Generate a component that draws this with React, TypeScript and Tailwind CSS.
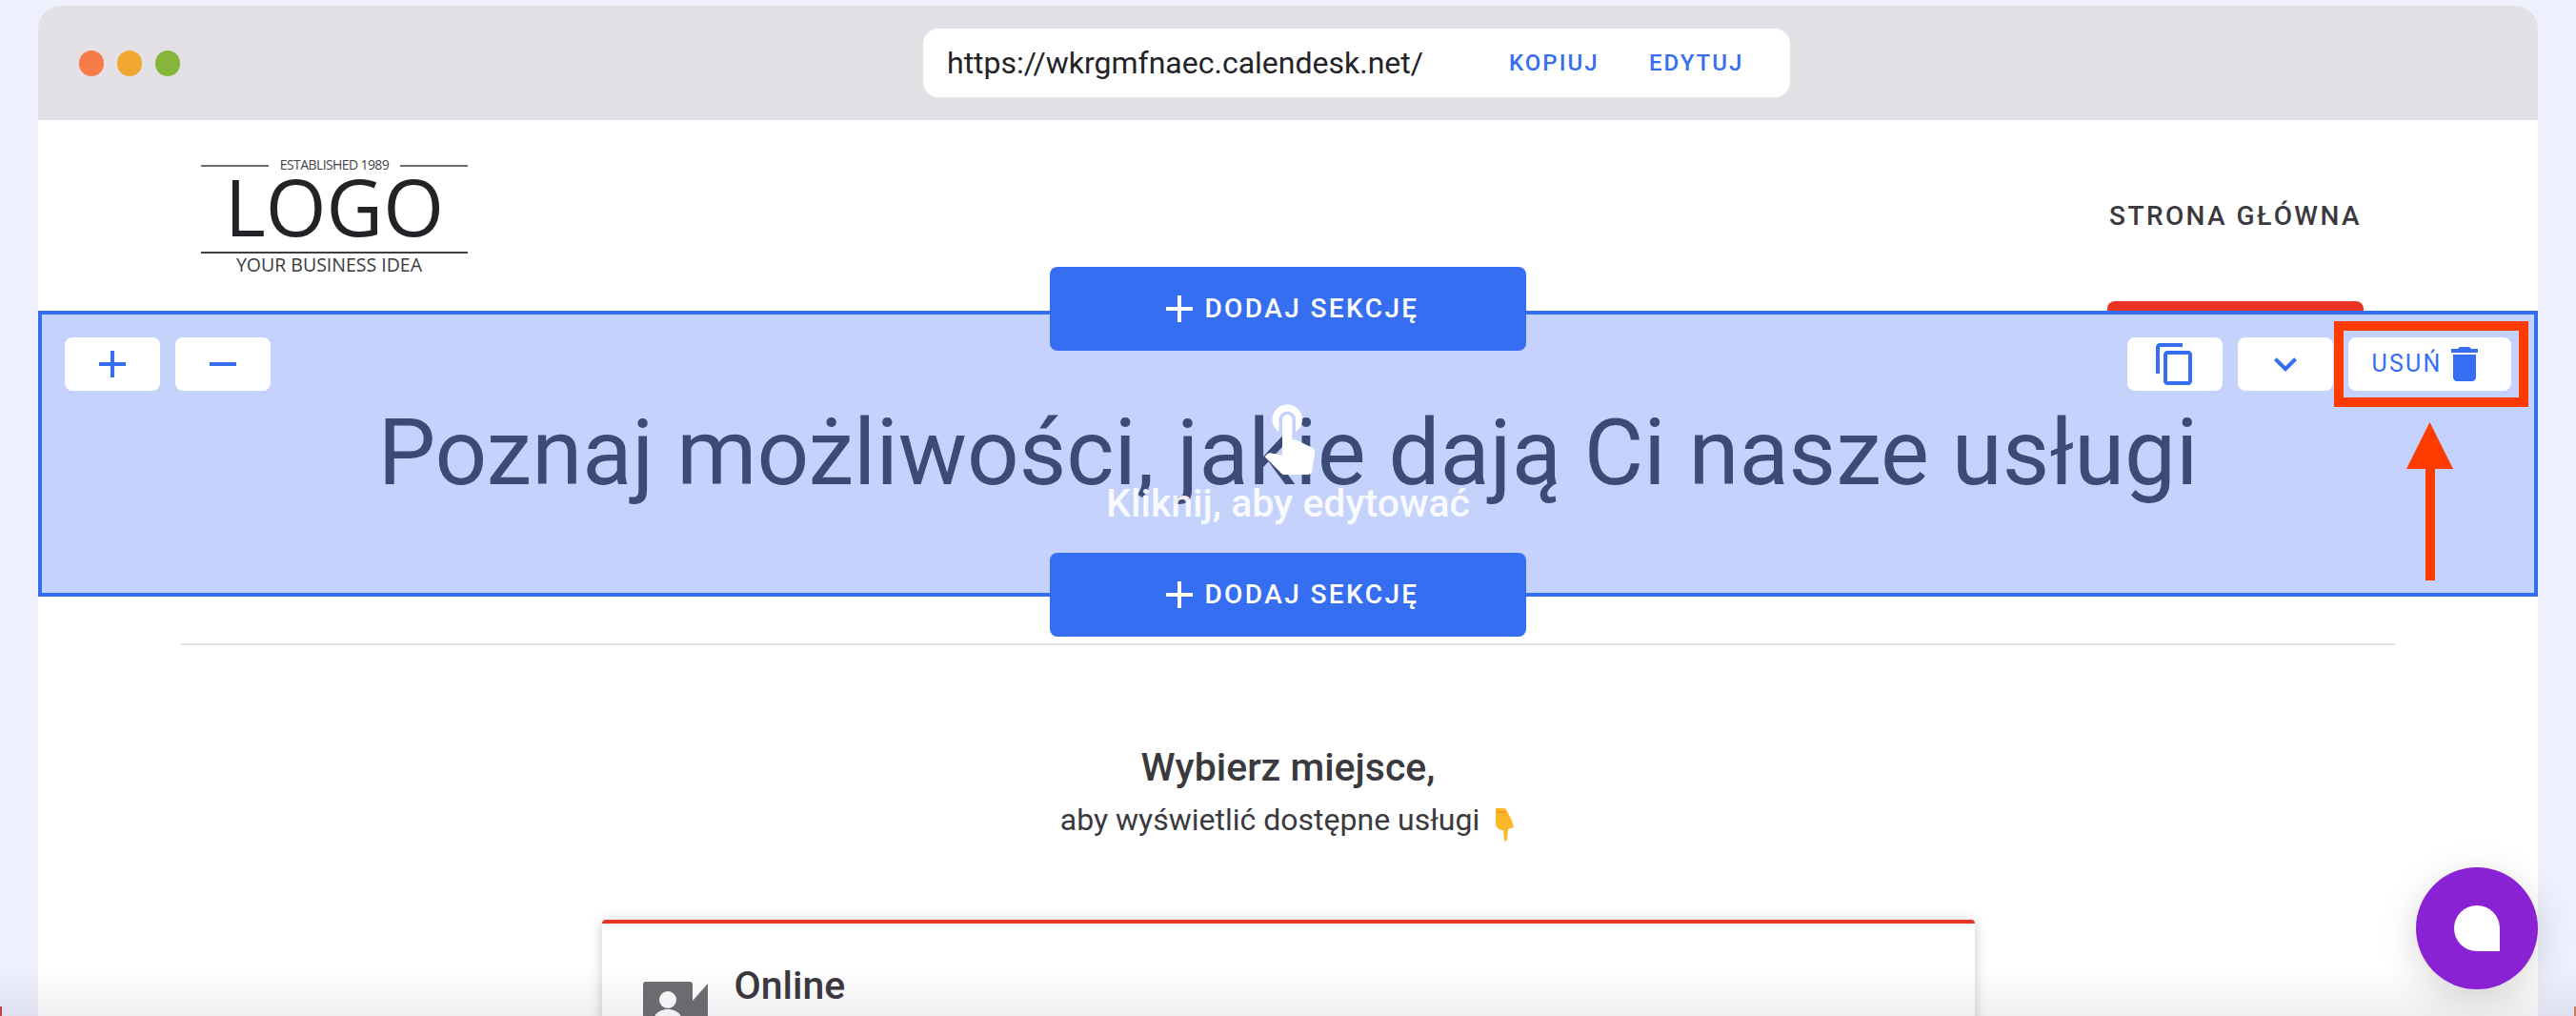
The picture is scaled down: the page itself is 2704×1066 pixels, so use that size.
import React from 'react'
import { MdAdd, MdContentCopy, MdDelete, MdExpandMore, MdRemove, MdTouchApp } from 'react-icons/md'

const ToolButton = ({ children, wide }: { children: React.ReactNode; wide?: boolean }) => (
  <div className={`h-14 rounded-lg bg-white flex items-center justify-center text-[#366ef2] ${wide ? 'w-[171px]' : 'w-[100px]'}`}>
    {children}
  </div>
)

const AddSection = ({ className }: { className: string }) => (
  <div className={`absolute left-1/2 -translate-x-1/2 z-20 w-[500px] h-[88px] rounded-lg bg-[#366ef2] text-white flex items-center justify-center ${className}`}>
    <MdAdd size={48} />
    <span className="ml-[2px] text-[28px] font-medium tracking-[2.4px]">DODAJ SEKCJĘ</span>
  </div>
)

const PointingDown = () => (
  <svg width="26" height="36" viewBox="0 0 26 36" className="inline-block ml-[12px] -mb-[4px]">
    <path d="M5 1h8c2 0 3 1 4 3l5 10 2 7-6 2-1 11c0 2-3 2-3 0l-1-10c-4 0-7-2-8-6z" fill="#fbb829" />
    <path d="M6 5h9" stroke="#f29f16" strokeWidth="2" />
  </svg>
)

export default function App() {
  return (
    <div className="relative w-[2704px] h-[1066px] overflow-hidden bg-[#eef0fd] px-10 pt-[6px] font-['Roboto',sans-serif] text-[#3a393e]">
      <div className="relative h-[1200px] rounded-t-3xl bg-white">
        {/* Browser bar */}
        <div className="h-[120px] rounded-t-3xl bg-[#e3e1e5] flex items-center pl-[43px]">
          <div className="flex gap-[14px]">
            <div className="w-[26px] h-[27px] rounded-full bg-[#f97a4b]" />
            <div className="w-[26px] h-[27px] rounded-full bg-[#efa72f]" />
            <div className="w-[26px] h-[27px] rounded-full bg-[#86b53a]" />
          </div>
          <div className="ml-[780px] w-[910px] h-[72px] rounded-2xl bg-white flex items-center pl-[25px] text-[#232226]">
            <span className="w-[590px] text-[32px]">https://wkrgmfnaec.calendesk.net/</span>
            <span className="w-[147px] text-[24px] font-medium tracking-[2px] text-[#366ef2]">KOPIUJ</span>
            <span className="text-[24px] font-medium tracking-[2px] text-[#366ef2]">EDYTUJ</span>
          </div>
        </div>

        {/* Site header */}
        <div className="h-[200px] flex justify-between pl-[171px] pr-[183px]">
          <div className="w-[280px] pt-[38px] font-['Open_Sans',sans-serif] text-[#232226]">
            <div className="h-4 flex items-center justify-between text-[14px] text-[#444348]">
              <div className="w-[71px] h-[2px] mt-1 bg-[#6b6a6e]" />
              <span className="tracking-[-0.6px]">ESTABLISHED 1989</span>
              <div className="w-[71px] h-[2px] mt-1 bg-[#6b6a6e]" />
            </div>
            <div className="mt-px h-[70px] text-center text-[82px] leading-[70px]">LOGO</div>
            <div className="mt-[13px] h-[2px] bg-[#3f3e42]" />
            <div className="pr-[11px] text-center text-[19.5px] leading-6 text-[#3a393e]">YOUR BUSINESS IDEA</div>
          </div>
          <div className="w-[269px] pt-[85px] flex flex-col items-center">
            <span className="text-[28px] leading-8 font-medium tracking-[2.4px]">STRONA GŁÓWNA</span>
            <div className="mt-[73px] w-full h-10 shrink-0 rounded-lg bg-[#e93323]" />
          </div>
        </div>

        {/* Selected section */}
        <div className="relative z-10 h-[300px] border-4 border-[#366ef2] bg-[#c4d2fc]">
          <AddSection className="-top-[50px]" />
          <AddSection className="-bottom-[46px]" />
          <div className="flex justify-between px-6 pt-6">
            <div className="flex gap-4">
              <ToolButton><MdAdd size={48} /></ToolButton>
              <ToolButton><MdRemove size={48} /></ToolButton>
            </div>
            <div className="flex gap-4">
              <ToolButton><MdContentCopy size={48} /></ToolButton>
              <ToolButton><MdExpandMore size={48} /></ToolButton>
              <ToolButton wide>
                <span className="text-[25px] tracking-[2.2px]">USUŃ</span>
                <MdDelete size={48} />
              </ToolButton>
            </div>
          </div>
          <h1 className="mt-[5px] text-center text-[96px] leading-[120px] font-normal text-[#3c4a78]">
            Poznaj możliwości, jakie dają Ci nasze usługi
          </h1>

          {/* Click hint */}
          <div className="absolute inset-x-0 top-[84px] flex flex-col items-center text-white">
            <MdTouchApp size={84} className="-mr-[2px]" />
            <span className="mt-[6px] text-[41px] leading-[48px] font-medium opacity-90">Kliknij, aby edytować</span>
          </div>

          {/* Annotation */}
          <div className="absolute top-[7px] right-[6px] w-[204px] h-[90px] border-[10px] border-[#ff3b00]" />
          <svg className="absolute top-[113px] right-[85px]" width="49" height="166" viewBox="0 0 49 166">
            <path d="M24.5 0 49 49H30v117H20V49H0z" fill="#ff3b00" />
          </svg>
        </div>

        <div className="mx-[150px] mt-[49px] h-[2px] bg-[#e2e2e2]" />

        {/* Location picker */}
        <div className="mt-[103px] text-center text-[41px] leading-[50px] font-medium">Wybierz miejsce,</div>
        <div className="mt-[10px] text-center text-[32px] leading-10">
          aby wyświetlić dostępne usługi
          <PointingDown />
        </div>
        <div className="mx-auto mt-[85px] w-[1441px] h-[300px] rounded-t border-t-4 border-[#e93323] bg-white shadow-[0_2px_14px_rgba(0,0,0,0.22)] flex pl-[43px] pt-[61px] gap-7">
          <svg width="68" height="60" viewBox="0 0 68 60" className="shrink-0">
            <rect x="0" y="0" width="52" height="60" rx="3" fill="#6f6e72" />
            <path d="M52 20 68 2v58H52z" fill="#6f6e72" />
            <circle cx="26" cy="19" r="9" fill="#fff" />
            <path d="M10 46c0-12 7-17 16-17s16 5 16 17v14H10z" fill="#fff" />
          </svg>
          <span className="-mt-[20px] text-[41px] leading-[48px] font-medium">Online</span>
        </div>
      </div>

      {/* Chat bubble */}
      <div className="absolute z-20 left-[2536px] top-[910px] w-32 h-32 rounded-full bg-[#8a22d4] flex items-center justify-center shadow-[0_10px_40px_rgba(0,0,0,0.16)]">
        <div className="w-12 h-12 rounded-3xl rounded-br-none bg-white" />
      </div>

      {/* Bottom fade of the screenshot */}
      <div className="absolute inset-x-0 bottom-0 z-10 h-12 bg-gradient-to-b from-transparent to-[#3a2a4a]/8" />
      <div className="absolute left-0 bottom-0 z-20 w-[2px] h-[10px] bg-[#c9404a]" />
      <div className="absolute right-0 bottom-0 z-20 w-[2px] h-[10px] bg-[#c9805a]" />
    </div>
  )
}
